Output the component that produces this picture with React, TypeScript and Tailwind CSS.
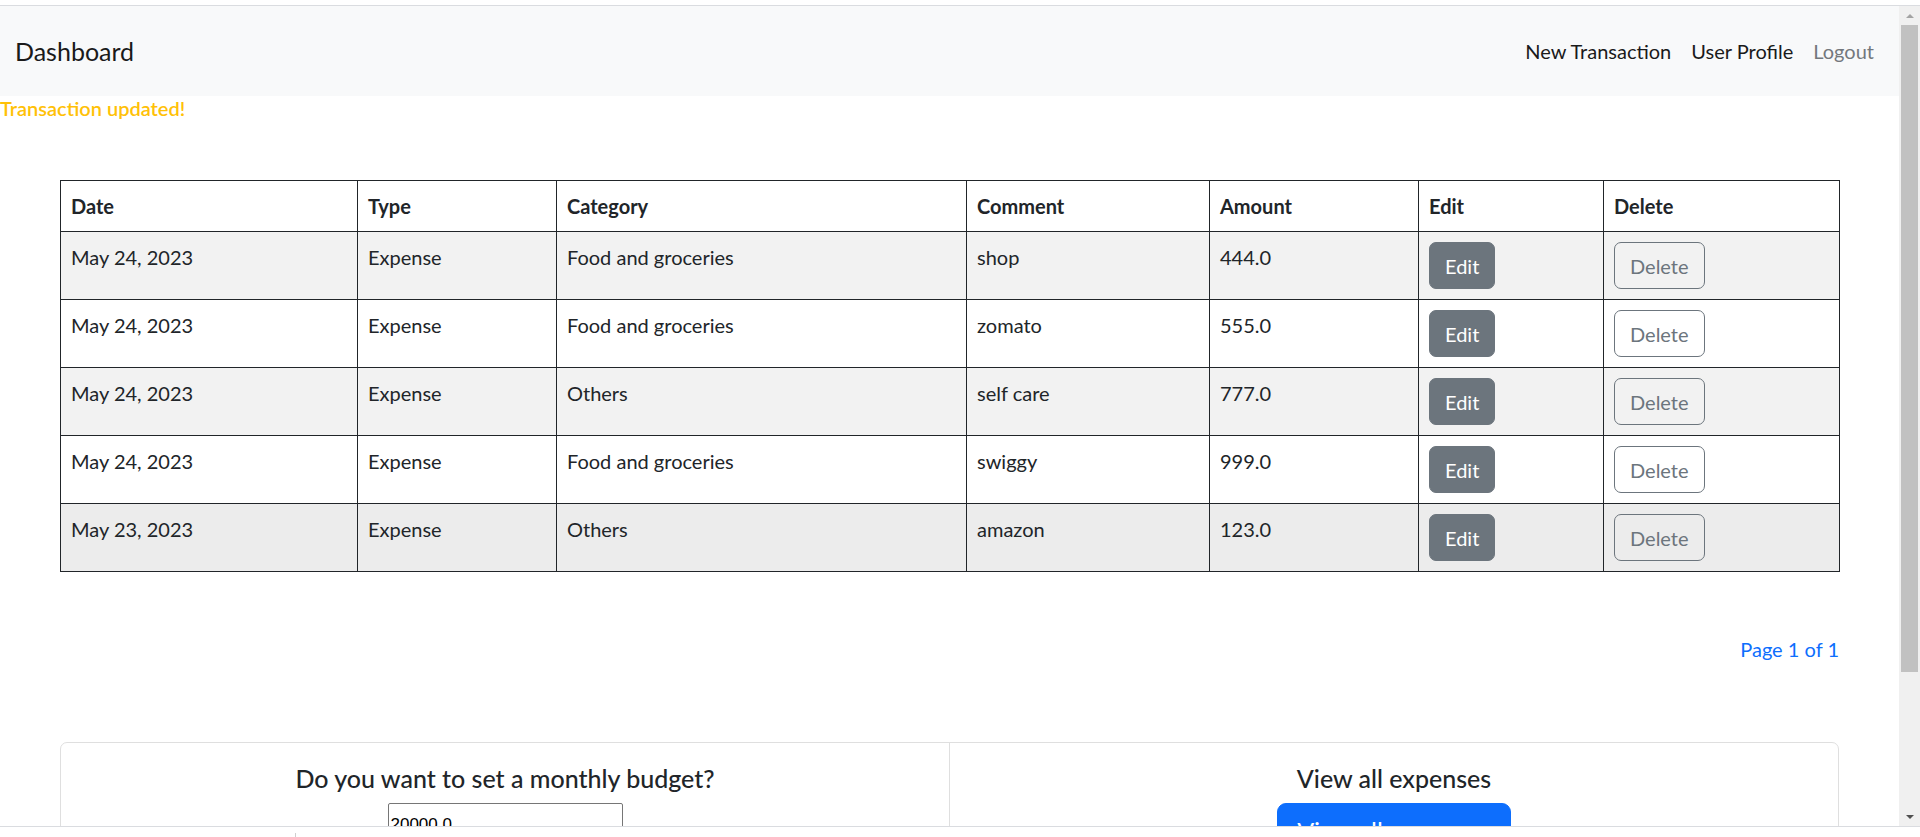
const transactions = [
  { date: "May 24, 2023", type: "Expense", category: "Food and groceries", comment: "shop", amount: "444.0", bg: "bg-[#f2f2f2]" },
  { date: "May 24, 2023", type: "Expense", category: "Food and groceries", comment: "zomato", amount: "555.0", bg: "bg-white" },
  { date: "May 24, 2023", type: "Expense", category: "Others", comment: "self care", amount: "777.0", bg: "bg-[#f2f2f2]" },
  { date: "May 24, 2023", type: "Expense", category: "Food and groceries", comment: "swiggy", amount: "999.0", bg: "bg-white" },
  { date: "May 23, 2023", type: "Expense", category: "Others", comment: "amazon", amount: "123.0", bg: "bg-[#ececec]" },
];

const headers = ["Date", "Type", "Category", "Comment", "Amount", "Edit", "Delete"];

const Navbar = () => (
  <nav className="h-[90px] shrink-0 bg-[#f8f9fa] flex items-center justify-between pl-[15px] pr-[15px]">
    <a className="text-[25px] leading-[38px] text-[#1a1a1a]">Dashboard</a>
    <ul className="flex items-center text-[20px] leading-[30px]">
      <li className="px-[10px] text-[#1a1a1a]">New Transaction</li>
      <li className="px-[10px] text-[#1a1a1a]">User Profile</li>
      <li className="px-[10px] text-[#73787d]">Logout</li>
    </ul>
  </nav>
);

const TransactionTable = () => (
  <div className="px-[60px] mt-[60px]">
    <table className="w-full table-fixed border-collapse text-[20px] leading-[30px] text-[#212529]">
      <colgroup>
        <col className="w-[297px]" />
        <col className="w-[199px]" />
        <col className="w-[410px]" />
        <col className="w-[243px]" />
        <col className="w-[209px]" />
        <col className="w-[185px]" />
        <col className="w-[236px]" />
      </colgroup>
      <thead>
        <tr>
          {headers.map((h) => (
            <th key={h} className="border border-[#212529] p-[10px] text-left font-bold align-top">
              {h}
            </th>
          ))}
        </tr>
      </thead>
      <tbody>
        {transactions.map((t, i) => (
          <tr key={i} className={t.bg}>
            <td className="border border-[#212529] p-[10px] align-top">{t.date}</td>
            <td className="border border-[#212529] p-[10px] align-top">{t.type}</td>
            <td className="border border-[#212529] p-[10px] align-top">{t.category}</td>
            <td className="border border-[#212529] p-[10px] align-top">{t.comment}</td>
            <td className="border border-[#212529] p-[10px] align-top">{t.amount}</td>
            <td className="border border-[#212529] p-[10px] align-top">
              <button className="h-[47px] px-[15px] rounded-[7px] border border-[#6c757d] bg-[#6c757d] text-white">
                Edit
              </button>
            </td>
            <td className="border border-[#212529] p-[10px] align-top">
              <button className="h-[47px] px-[15px] rounded-[7px] border border-[#6c757d] bg-transparent text-[#6c757d]">
                Delete
              </button>
            </td>
          </tr>
        ))}
      </tbody>
    </table>
  </div>
);

const BottomCards = () => (
  <div className="mx-[60px] mt-[78px] flex border border-[#dfdfdf] rounded-[7px] text-[#212529]">
    <div className="flex-1 border-r border-[#dfdfdf] pt-[20px] flex flex-col items-center">
      <h5 className="text-[25px] leading-[30px] font-medium mb-[10px]">Do you want to set a monthly budget?</h5>
      <input
        defaultValue="20000.0"
        className="w-[235px] h-[44px] border border-[#767676] rounded-[2px] px-[2px] text-[17px] font-['Liberation_Sans',sans-serif] text-black"
      />
    </div>
    <div className="flex-1 pt-[20px] flex flex-col items-center">
      <h5 className="text-[25px] leading-[30px] font-medium mb-[10px]">View all expenses</h5>
      <button className="w-[234px] pt-[8px] pb-[12px] rounded-[9px] border border-[#0d6efd] bg-[#0d6efd] text-white text-[25px] leading-[38px]">
        View all expenses
      </button>
    </div>
  </div>
);

const Scrollbar = () => (
  <div className="w-[21px] shrink-0 bg-[#f0f0f0] flex flex-col items-center">
    <div className="h-[19px] flex items-center justify-center">
      <div className="w-0 h-0 border-x-[4px] border-x-transparent border-b-[4px] border-b-[#a3a3a3]" />
    </div>
    <div className="w-[17px] h-[647px] bg-[#c1c1c1]" />
    <div className="flex-1" />
    <div className="h-[19px] flex items-center justify-center">
      <div className="w-0 h-0 border-x-[4px] border-x-transparent border-t-[4px] border-t-[#505050]" />
    </div>
  </div>
);

export default function App() {
  return (
    <div className="w-[1920px] h-[837px] overflow-hidden bg-white flex flex-col font-['Lato',sans-serif]">
      <div className="h-[5px] shrink-0 bg-white" />
      <div className="h-px shrink-0 bg-[#dadce0]" />
      <div className="h-[820px] shrink-0 flex">
        <main className="flex-1 flex flex-col overflow-hidden">
          <Navbar />
          <div className="text-[20px] leading-[24px] font-semibold text-[#ffc107]">Transaction updated!</div>
          <TransactionTable />
          <div className="px-[60px] mt-[62px] text-right text-[20px] leading-[30px] text-[#0d6efd]">Page 1 of 1</div>
          <BottomCards />
        </main>
        <Scrollbar />
      </div>
      <div className="h-px shrink-0 bg-[#dadce0]" />
      <div className="h-[10px] shrink-0 pl-[295px] flex items-end bg-white">
        <div className="w-px h-[4px] bg-[#cfcfcf]" />
      </div>
    </div>
  );
}
